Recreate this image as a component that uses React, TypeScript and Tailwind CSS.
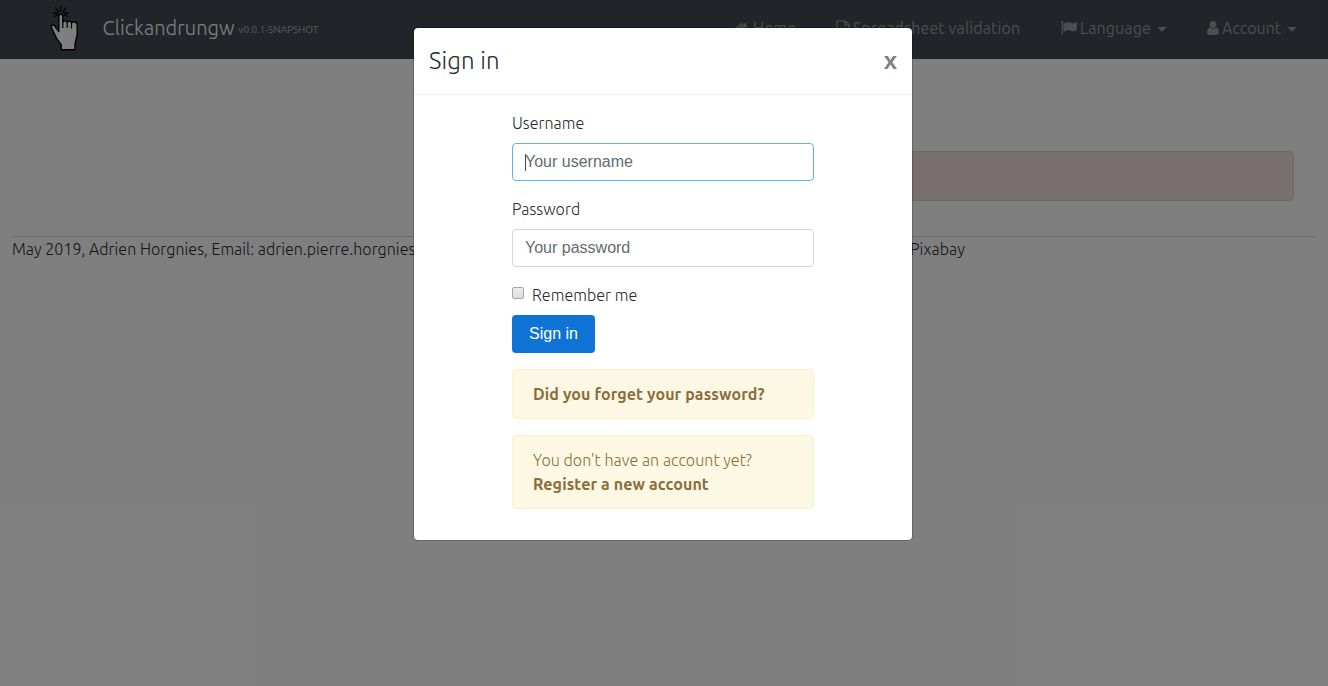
import { ReactNode } from "react";

function Icon({ box, className, children }: { box: string; className: string; children: ReactNode }) {
  return (
    <svg viewBox={box} className={className} fill="currentColor" aria-hidden="true">
      {children}
    </svg>
  );
}

function Caret() {
  return (
    <svg viewBox="0 0 10 5" className="ml-[3px] mt-[3px] h-[5px] w-[10px] shrink-0" fill="currentColor" aria-hidden="true">
      <path d="M0.300 0h9.400L5 4.700z" />
    </svg>
  );
}

function HandLogo() {
  return (
    <svg viewBox="0 0 30 46" className="mt-[6px] h-[46px] w-[30px] shrink-0" aria-hidden="true">
      <g stroke="#000" strokeWidth="1.3" strokeLinecap="round">
        <path d="M10.800 0.500v4.700M5.700 1.800l3 4M15.800 1.800l-3 4M3.500 7h4.200M14 7h4.200M4.500 10.500l3-2M17.300 10.500l-3-2" />
      </g>
      <path
        d="M8.800 10.300q0-2 2-2t2 2v6.200q.2-1.800 2.200-1.800t2.200 2q.3-1.600 2.200-1.600t2.100 2.200q.3-1.500 2.200-1.500 2.500 0 3.500 2.600v10.200l-2.200 9.500v5.700H11.200v-5.100L6.700 32.600 1.400 21.500q-.7-2 .8-2.500 1.300-.4 2.500 1l4.100 5.500z"
        fill="#fff"
        stroke="#000"
        strokeWidth="1.400"
        strokeLinejoin="round"
      />
      <path d="M12.800 16v6M17.200 16.500v5.500M21.500 17.500v5" stroke="#000" strokeWidth="1.200" />
    </svg>
  );
}

const label = "flex h-6 items-center tracking-[0.03px]";
const input =
  "mt-2 h-[38px] w-full rounded-[4px] border bg-white px-3 font-['Liberation_Sans',sans-serif] text-base font-normal text-[#495057] outline-none placeholder:text-[#636c72] placeholder:opacity-100";

export default function App() {
  return (
    <div className="relative h-[686px] overflow-hidden bg-white font-['Ubuntu','Open_Sans',sans-serif] text-base font-light text-[#292b2c]">
      <nav className="flex h-[59px] bg-[#424a52]">
        <div className="flex w-[420px] pl-[50px]">
          <HandLogo />
          <div className="flex h-[56px] items-center pl-[22.500px]">
            <span className="w-[136px] whitespace-nowrap text-[20px] tracking-[0.1px] text-white">Clickandrungw</span>
            <span className="mt-[3px] whitespace-nowrap text-[10px] font-normal text-[#b5b7ba]">v0.0.1-SNAPSHOT</span>
          </div>
        </div>
        <div className="ml-auto flex h-[56px] items-center gap-10 pr-[30px] font-normal text-[#999b9e]">
          <a className="flex w-[62px] items-center gap-1 whitespace-nowrap">
            <Icon box="0 128 1792 1536" className="h-[13px] w-[15px] shrink-0">
              <path d="M1472 992v480q0 26-19 45t-45 19h-384v-384h-256v384h-384q-26 0-45-19t-19-45v-480q0-1 .5-3t.5-3l575-474 575 474q1 2 1 6zm223-69l-62 74q-8 9-21 11h-3q-13 0-21-7l-692-577-692 577q-12 8-24 7-13-2-21-11l-62-74q-8-10-7-23.500t11-21.500l719-599q32-26 76-26t76 26l244 204v-195q0-14 9-23t23-9h192q14 0 23 9t9 23v408l219 182q10 8 11 21.500t-7 23.500z" />
            </Icon>
            Home
          </a>
          <a className="flex w-[185px] items-center gap-[3px] whitespace-nowrap tracking-[0.14px]">
            <svg viewBox="0 0 14 16" className="-mt-[1px] h-4 w-[14px] shrink-0" fill="none" stroke="currentColor" strokeWidth="1.200">
              <path d="M1 1h8.500L13 4.500V15H1zM9 1v4h4M4 7.500l5 5M9 7.500l-5 5" />
            </svg>
            Spreadsheet validation
          </a>
          <a className="flex w-[106px] items-center gap-[3px] whitespace-nowrap tracking-[0.1px]">
            <Icon box="64 128 1728 1536" className="h-[14px] w-[16px] shrink-0">
              <path d="M320 256q0 72-64 110v1266q0 13-9.500 22.500t-22.500 9.500h-64q-13 0-22.500-9.500t-9.500-22.500v-1266q-64-38-64-110 0-53 37.500-90.500t90.500-37.500 90.500 37.500 37.500 90.500zm1472 64v763q0 25-12.500 38.500t-39.500 27.500q-215 116-369 116-61 0-123.500-22t-108.500-48-115.500-48-142.500-22q-192 0-464 146-17 9-33 9-26 0-45-19t-19-45v-742q0-32 31-55 21-14 79-43 236-120 421-120 107 0 200 29t219 88q38 19 88 19 54 0 117.500-21t110-47 88-47 54.500-21q26 0 45 19t19 45z" />
            </Icon>
            Language
            <Caret />
          </a>
          <a className="flex w-[91px] items-center gap-[3px] whitespace-nowrap">
            <Icon box="0 128 1280 1536" className="h-[14px] w-[12px] shrink-0">
              <path d="M1280 1399q0 109-62.500 187t-150.500 78h-854q-88 0-150.500-78t-62.500-187q0-85 8.500-160.500t31.500-152 58.500-131 94-89 134.500-34.500q131 128 313 128t313-128q76 0 134.500 34.500t94 89 58.500 131 31.500 152 8.500 160.500zm-256-887q0 159-112.500 271.500t-271.500 112.500-271.500-112.500-112.500-271.500 112.500-271.500 271.500-112.500 271.500 112.500 112.500 271.500z" />
            </Icon>
            Account
            <Caret />
          </a>
        </div>
      </nav>

      <main className="pl-[460px] pr-[34px] pt-[92px]">
        <div className="h-[50px] rounded-[4px] border border-[#ebcccc] bg-[#f2dede]" />
      </main>
      <footer className="mx-3 mr-[14px] mt-[35px] flex justify-between border-t border-black/15">
        <p className="flex h-6 w-[640px] items-center whitespace-nowrap tracking-[0.04px]">
          May 2019, Adrien Horgnies, Email: adrien.pierre.horgnies
        </p>
        <p className="flex h-6 w-[404px] items-center tracking-[0.1px]">Pixabay</p>
      </footer>

      <div className="absolute inset-0 flex items-start justify-center bg-black/50 pr-[2px] pt-[27px]">
        <section
          role="dialog"
          className="h-[514px] w-[500px] rounded-[5px] border border-black/20 bg-white bg-clip-padding"
        >
          <header className="flex h-[67px] items-center justify-between border-b border-[#eceeef] px-[15px]">
            <h4 className="text-[24px] tracking-[0.1px]">Sign in</h4>
            <button className="font-['Liberation_Sans',sans-serif] text-[24px] font-bold leading-none text-[#808080]">x</button>
          </header>
          <form className="ml-[98px] flex w-[302px] flex-col pt-4">
            <label className={label}>Username</label>
            <div className="relative">
              <input className={`${input} border-[#5cb3fd]`} placeholder="Your username" />
              <span className="absolute left-[13px] top-[19px] h-[17px] w-px bg-[#464a4c]" />
            </div>
            <label className={`${label} mt-4`}>Password</label>
            <input type="password" className={`${input} border-[#d5d6d7]`} placeholder="Your password" />
            <label className="mt-4 flex h-6 items-center tracking-[0.05px]">
              <span className="-mt-[4px] mr-2 h-3 w-3 rounded-[2px] border border-[#a6a6a6] bg-linear-to-b from-[#ededed] to-[#dcdcdc]" />
              Remember me
            </label>
            <button
              type="button"
              className="mt-2 h-[38px] w-[83px] rounded-[4px] bg-[#0e73d5] font-['Liberation_Sans',sans-serif] text-base font-normal text-white"
            >
              Sign in
            </button>
            <div className="mt-4 flex h-[50px] items-center whitespace-nowrap rounded-[4px] border border-[#faf2cc] bg-[#fcf8e3] px-5 font-bold tracking-[0.1px] text-[#8a6d3b]">
              Did you forget your password?
            </div>
            <div className="mt-4 h-[74px] whitespace-nowrap rounded-[4px] border border-[#faf2cc] bg-[#fcf8e3] px-5 py-3 leading-6 text-[#8a6d3b]">
              <p className="tracking-[0.05px]">You don't have an account yet?</p>
              <p className="font-bold tracking-[0.11px]">Register a new account</p>
            </div>
          </form>
        </section>
      </div>
    </div>
  );
}
